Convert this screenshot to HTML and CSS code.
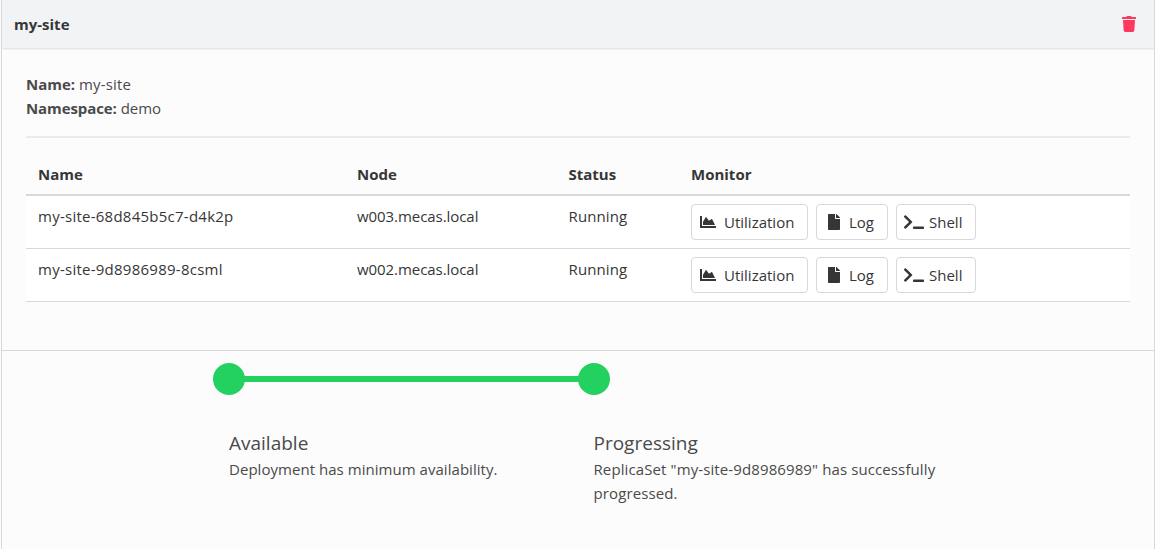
FILE: index.html
```
<!DOCTYPE html>
<html lang="en">
<head>
<meta charset="utf-8">
<title>my-site</title>
<link rel="stylesheet" href="styles.css">
</head>
<body>
<svg class="defs" aria-hidden="true">
  <symbol id="chart" viewBox="0 0 512 512"><path d="M500 384c6.600 0 12 5.400 12 12v40c0 6.600-5.400 12-12 12H12c-6.600 0-12-5.400-12-12V76c0-6.600 5.400-12 12-12h40c6.600 0 12 5.400 12 12v308h436zM372.700 159.500L288 216l-85.300-113.700c-5.100-6.800-15.500-6.300-19.900 1L96 248v104h384l-89.900-187.800c-3.200-6.500-11.400-8.700-17.400-4.700z"/></symbol>
  <symbol id="file" viewBox="0 0 384 512"><path d="M224 136V0H24C10.700 0 0 10.700 0 24v464c0 13.300 10.700 24 24 24h336c13.300 0 24-10.700 24-24V160H248c-13.200 0-24-10.800-24-24zm160-14.100v6.100H256V0h6.100c6.400 0 12.500 2.500 17 7l97.900 98c4.500 4.500 7 10.600 7 16.900z"/></symbol>
  <symbol id="terminal" viewBox="0 0 640 512"><path d="M258 273L63.600 467.300c-9.400 9.400-24.600 9.400-33.900 0L7 444.600c-9.400-9.400-9.400-24.500 0-33.900L161 256 7 101.300c-9.300-9.400-9.300-24.500 0-33.900l22.700-22.700c9.400-9.400 24.600-9.400 33.900 0L258 239c9.400 9.400 9.400 24.600 0 34zM640 456v-32c0-13.300-10.700-24-24-24H312c-13.300 0-24 10.700-24 24v32c0 13.300 10.700 24 24 24h304c13.300 0 24-10.700 24-24z"/></symbol>
  <symbol id="trash" viewBox="0 0 448 512"><path d="M432 32H312l-9.400-18.700A24 24 0 0 0 281.100 0H166.800a23.700 23.700 0 0 0-21.400 13.300L136 32H16A16 16 0 0 0 0 48v32a16 16 0 0 0 16 16h416a16 16 0 0 0 16-16V48a16 16 0 0 0-16-16zM53.200 467a48 48 0 0 0 47.900 45h245.800a48 48 0 0 0 47.900-45L416 128H32z"/></symbol>
</svg>
<main class="card">
  <header class="card-header">
    <h1 class="card-title">my-site</h1>
    <svg class="trash"><use href="#trash"/></svg>
  </header>
  <section class="content">
    <p class="fact name"><strong>Name:</strong> <span>my-site</span></p>
    <p class="fact namespace"><strong>Namespace:</strong> <span>demo</span></p>
    <hr class="rule">
    <div class="table">
      <div class="row head"><span>Name</span><span>Node</span><span>Status</span><span>Monitor</span></div>
      <div class="row">
        <span class="pod">my-site-68d845b5c7-d4k2p</span><span class="node">w003.mecas.local</span><span class="status">Running</span>
        <div class="buttons">
          <a class="button util"><svg class="i-chart"><use href="#chart"/></svg><span>Utilization</span></a>
          <a class="button log"><svg class="i-file"><use href="#file"/></svg><span>Log</span></a>
          <a class="button shell"><svg class="i-term"><use href="#terminal"/></svg><span>Shell</span></a>
        </div>
      </div>
      <div class="row">
        <span class="pod">my-site-9d8986989-8csml</span><span class="node">w002.mecas.local</span><span class="status">Running</span>
        <div class="buttons">
          <a class="button util"><svg class="i-chart"><use href="#chart"/></svg><span>Utilization</span></a>
          <a class="button log"><svg class="i-file"><use href="#file"/></svg><span>Log</span></a>
          <a class="button shell"><svg class="i-term"><use href="#terminal"/></svg><span>Shell</span></a>
        </div>
      </div>
    </div>
  </section>
  <section class="steps">
    <div class="track"><i class="dot"></i><i class="line"></i><i class="dot"></i></div>
    <div class="step-texts">
      <div><h2 class="step-title">Available</h2><p class="deploy">Deployment has minimum availability.</p></div>
      <div><h2 class="step-title">Progressing</h2><p class="replica">ReplicaSet "my-site-9d8986989" has successfully<br>progressed.</p></div>
    </div>
  </section>
</main>
</body>
</html>
```
FILE: styles.css
```
* { box-sizing: border-box; }
body {
  margin: 0;
  background: #fcfcfc;
  color: #4a4a4a;
  font: 15px/24px "Open Sans", "Noto Sans", sans-serif;
}
h1, h2, p { margin: 0; }
.defs { display: none; }
.card {
  height: 549px;
  margin-left: 1px;
  border-left: 1px solid #d8d8d8;
  border-right: 1px solid #d8d8d8;
  overflow: hidden;
}
.card-header {
  display: flex;
  align-items: center;
  justify-content: space-between;
  height: 48px;
  padding: 0 18px 0 12px;
  background: #f2f3f5;
  box-shadow: 0 1px 2px rgba(10, 10, 10, .13);
}
.card-title { color: #363636; font-size: 15px; font-weight: 700; }
.trash { width: 14px; height: 16px; fill: #ff3860; }
.content { height: 302px; padding: 24px 24px 0; }
.fact { height: 24px; white-space: nowrap; }
.name span { letter-spacing: .15px; }
.namespace strong { letter-spacing: -.1px; }
.rule { height: 2px; margin: 16px 0; border: 0; background: #ebebeb; }
.row {
  display: grid;
  grid-template-columns: 319px 211.500px 122.500px 1fr;
  height: 53px;
  padding: 8px 12px 0;
  border-bottom: 1px solid #d8d8d8;
  background: #fff;
  color: #363636;
  white-space: nowrap;
}
.row.head { height: 42px; border-width: 2px; background: none; font-weight: 700; }
.pod { letter-spacing: .25px; }
.node { letter-spacing: -.06px; }
.status { letter-spacing: .12px; }
.buttons { display: flex; gap: 8px; }
.button {
  display: flex;
  align-items: center;
  height: 36px;
  padding-left: 8px;
  border: 1px solid #d8d8d8;
  border-radius: 4px;
  background: #fff;
}
.button svg { flex: none; height: 16px; fill: #363636; }
.util { width: 117px; }
.log { width: 72px; padding-left: 11px; }
.shell { width: 80px; padding-left: 7px; }
.button .i-chart { width: 16px; margin-right: 8px; }
.button .i-file { width: 12px; margin-right: 9px; }
.button .i-term { width: 20px; margin-right: 5px; }
.steps { height: 199px; padding: 12px 0 0 211px; border-top: 1px solid #d8d8d8; }
.track { display: flex; align-items: center; width: 397px; height: 32px; }
.dot { width: 32px; height: 32px; border-radius: 50%; background: #23d160; }
.line { flex: 1; height: 6px; margin: 0 -1px; background: #23d160; }
.step-texts {
  display: grid;
  grid-template-columns: 364.500px 365px;
  padding: 36px 0 0 16px;
  white-space: nowrap;
}
.step-title { height: 26px; font-size: 19px; font-weight: 400; line-height: 24px; }
.deploy { letter-spacing: .04px; }
.replica { letter-spacing: .11px; }
```
